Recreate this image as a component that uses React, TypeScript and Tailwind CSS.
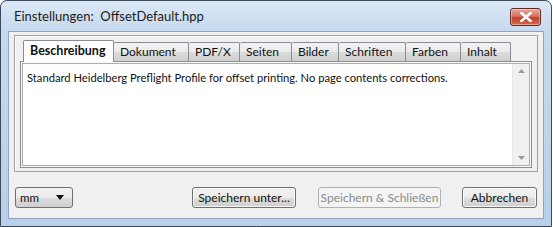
import React from 'react'

const TABS: { label: string; w: number }[] = [
  { label: 'Beschreibung', w: 91 },
  { label: 'Dokument', w: 75 },
  { label: 'PDF/X', w: 51 },
  { label: 'Seiten', w: 52 },
  { label: 'Bilder', w: 47 },
  { label: 'Schriften', w: 67 },
  { label: 'Farben', w: 55 },
  { label: 'Inhalt', w: 50 },
]

const font = { fontFamily: 'Lato, "Noto Sans", Arial, sans-serif' }

function Btn({ children, w, disabled }: { children: React.ReactNode; w: number; disabled?: boolean }) {
  return (
    <div
      className={`h-[21px] rounded-[3px] border flex items-center justify-center text-[12px] ${
        disabled
          ? 'border-[#adb2b5] bg-[#f4f4f4] text-[#8b8b8b]'
          : 'border-[#707070] bg-[linear-gradient(#f2f2f2_0%,#ebebeb_50%,#dddddd_50%,#cfcfcf_100%)] text-[#111] shadow-[inset_0_0_0_1px_rgba(255,255,255,0.8)]'
      }`}
      style={{ width: w }}
    >
      {children}
    </div>
  )
}

export default function App() {
  return (
    <div className="w-[553px] h-[227px] bg-white" style={font}>
      <div className="w-[552px] h-[227px] rounded-t-[7px] border border-[#3c4a5c] bg-[linear-gradient(#dce9f7_0%,#c6d9ee_30px,#b9d0ea_100%)] flex flex-col">
        {/* title bar */}
        <div className="h-[30px] flex items-center pl-[13px] pr-[10px] shrink-0">
          <span className="text-[13px] text-[#1b1b1b] pt-[1px]">Einstellungen:&nbsp; OffsetDefault.hpp</span>
          <div className="ml-auto mt-[1px] w-[31px] h-[18px] rounded-[3px] border border-[#5e2a2a] bg-[linear-gradient(#e9a99c_0%,#d6725f_45%,#c0412a_55%,#cf6a50_100%)] flex items-center justify-center shadow-[inset_0_0_0_1px_rgba(255,220,210,0.5)]">
            <svg width="12" height="10" viewBox="0 0 12 10">
              <path d="M1.5 1 L10.5 9 M10.5 1 L1.5 9" stroke="#fff" strokeWidth="2.6" strokeLinecap="square" />
            </svg>
          </div>
        </div>
        {/* client */}
        <div className="mx-[7px] mb-[7px] flex-1 bg-[#f0f0f0] border border-[#8ea4bf] flex flex-col">
          <div className="mt-[3px] mx-[5px] h-[137px] border border-[#a0a0a0] shadow-[inset_1px_1px_0_#fff] flex flex-col pl-[5px] pr-[5px] pb-[3px]">
            {/* tabs */}
            <div className="flex items-end h-[25px] pl-[3px] shrink-0">
              {TABS.map((t, i) =>
                i === 0 ? (
                  <div
                    key={t.label}
                    className="h-[22px] -mb-px relative z-10 border border-b-0 border-[#898c95] rounded-t-[2px] bg-white flex items-center pl-[6px] text-[12.5px] font-bold text-[#111]"
                    style={{ width: t.w }}
                  >
                    {t.label}
                  </div>
                ) : (
                  <div
                    key={t.label}
                    className="h-[19px] border border-b-0 border-l-0 border-[#898c95] rounded-t-[2px] bg-[linear-gradient(#f2f2f2_0%,#ebebeb_50%,#dddddd_50%,#cfcfcf_100%)] flex items-center pl-[6px] text-[12px] text-[#111]"
                    style={{ width: t.w }}
                  >
                    {t.label}
                  </div>
                )
              )}
            </div>
            {/* panel */}
            <div className="flex-1 border border-[#898c95] bg-[#f9f9f9] p-px flex">
              <div className="flex-1 border border-[#abadb3] bg-white flex">
                <div className="flex-1 pl-[4px] pt-[7px] text-[11.2px] text-[#111] leading-[14px]">
                  Standard Heidelberg Preflight Profile for offset printing. No page contents corrections.
                </div>
                <div className="w-[17px] bg-[#f0f0f0] border-l border-[#e6e6e6] flex flex-col items-center justify-between py-[5px]">
                  <svg width="7" height="4" viewBox="0 0 7 4">
                    <path d="M0 4 L3.5 0 L7 4 Z" fill="#9a9a9a" />
                  </svg>
                  <svg width="7" height="4" viewBox="0 0 7 4">
                    <path d="M0 0 L3.5 4 L7 0 Z" fill="#9a9a9a" />
                  </svg>
                </div>
              </div>
            </div>
          </div>
          {/* bottom row */}
          <div className="flex items-center mt-[15px] pl-[6px] pr-[6px]">
            <div className="w-[60px] h-[21px] rounded-[3px] border border-[#707070] bg-[linear-gradient(#f2f2f2_0%,#ebebeb_50%,#dddddd_50%,#cfcfcf_100%)] flex items-center pl-[4px] pr-[8px] text-[11.5px] text-[#111]">
              mm
              <svg className="ml-auto" width="8" height="5" viewBox="0 0 8 5">
                <path d="M0 0 L8 0 L4 5 Z" fill="#111" />
              </svg>
            </div>
            <div className="ml-[119px]">
              <Btn w={104}>Speichern unter...</Btn>
            </div>
            <div className="ml-[22px]">
              <Btn w={123} disabled>Speichern &amp; Schließen</Btn>
            </div>
            <div className="ml-[21px]">
              <Btn w={75}>Abbrechen</Btn>
            </div>
          </div>
        </div>
      </div>
    </div>
  )
}
